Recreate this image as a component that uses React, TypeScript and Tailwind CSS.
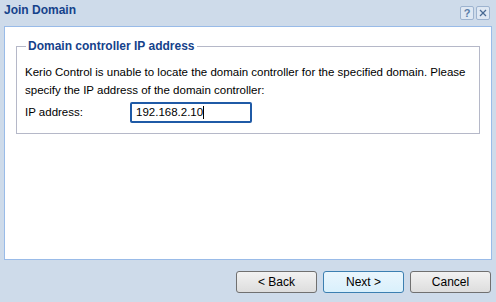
export default function App() {
  return (
    <div
      className="w-[496px] h-[302px] bg-[#cedbea] flex flex-col overflow-hidden"
      style={{ fontFamily: '"Liberation Sans", Arial, sans-serif' }}
    >
      {/* Title bar */}
      <div className="h-[26px] flex items-start justify-between pl-[4px] pr-[6px] pt-[3px]">
        <span className="text-[12px] leading-[15px] font-bold text-[#15428b]">Join Domain</span>
        <div className="flex gap-[2px] mt-[3px]">
          <div className="w-[14px] h-[14px] rounded-[2px] border border-[#9db3cf] bg-[#dfe8f3] flex items-center justify-center text-[11px] font-bold text-[#5a7da8] leading-none">
            ?
          </div>
          <div className="w-[14px] h-[14px] rounded-[2px] border border-[#9db3cf] bg-[#dfe8f3] flex items-center justify-center">
            <svg width="8" height="8" viewBox="0 0 8 8" stroke="#4a6a93" strokeWidth="1.2">
              <line x1="1" y1="1" x2="7" y2="7" />
              <line x1="7" y1="1" x2="1" y2="7" />
            </svg>
          </div>
        </div>
      </div>

      {/* Body panel */}
      <div className="mx-[4px] h-[234px] bg-white border border-[#99bbe8] pt-[10px] px-[11px]">
        <fieldset className="border border-[#b5b8c8] px-[8px] pb-[10px]">
          <legend className="px-[2px] ml-[1px] text-[12px] font-bold text-[#15428b]">
            Domain controller IP address
          </legend>
          <p className="text-[11.5px] leading-[18px] text-black mt-[8px]">
            Kerio Control is unable to locate the domain controller for the specified domain. Please specify the IP
            address of the domain controller:
          </p>
          <div className="flex items-center mt-[3px]">
            <span className="w-[105px] text-[11.5px] text-black">IP address:</span>
            <div className="w-[122px] h-[21px] border-2 border-[#1f5aa6] rounded-[2px] flex items-center px-[4px] text-[11.5px] text-black">
              192.168.2.10<span className="w-px h-[13px] bg-black" />
            </div>
          </div>
        </fieldset>
      </div>

      {/* Footer buttons */}
      <div className="flex justify-end gap-[6px] pr-[5px] pt-[11px]">
        {['< Back', 'Next >', 'Cancel'].map((label) => (
          <button
            key={label}
            className={
              label === 'Next >'
                ? 'w-[81px] h-[22px] rounded-[3px] border border-[#3c7fb1] bg-gradient-to-b from-[#eaf6fd] to-[#d9f0fc] text-[12px] text-black'
                : 'w-[81px] h-[22px] rounded-[3px] border border-[#707070] bg-gradient-to-b from-[#f2f2f2] to-[#dddddd] text-[12px] text-black'
            }
          >
            {label}
          </button>
        ))}
      </div>
    </div>
  );
}
